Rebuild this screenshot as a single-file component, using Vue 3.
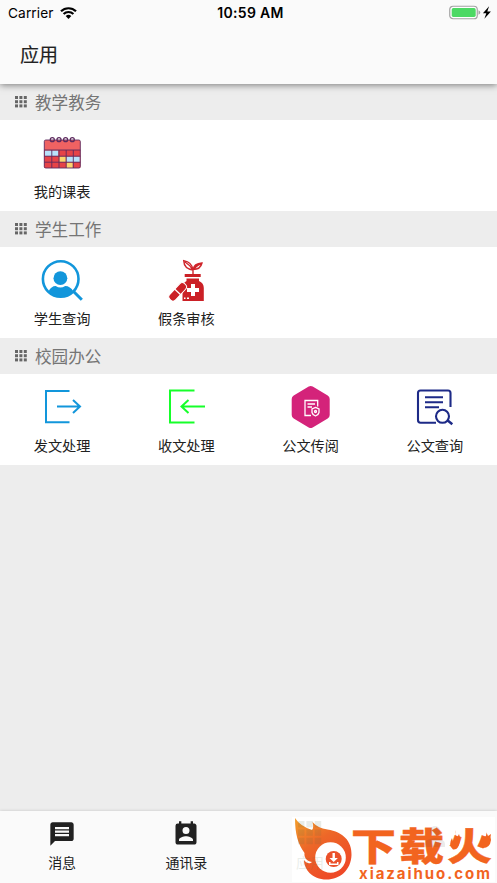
<script setup>
const sections = [
  { title: '教学教务', items: [{ label: '我的课表', icon: 'calendar' }] },
  { title: '学生工作', items: [{ label: '学生查询', icon: 'student' }, { label: '假条审核', icon: 'medicine' }] },
  {
    title: '校园办公',
    items: [
      { label: '发文处理', icon: 'send' },
      { label: '收文处理', icon: 'receive' },
      { label: '公文传阅', icon: 'circulate' },
      { label: '公文查询', icon: 'search' },
    ],
  },
]
const dots = [0, 1, 2, 3, 4, 5, 6, 7, 8]
</script>

<template>
  <div class="screen">
    <header class="top">
      <div class="status">
        <div class="carrier">
          <span>Carrier</span>
          <svg width="17" height="12" viewBox="0 0 17 12">
            <g fill="none" stroke="#000" stroke-width="2.2">
              <path d="M1 4.3a10.7 10.7 0 0 1 15 0" />
              <path d="M3.6 7a7 7 0 0 1 9.8 0" />
            </g>
            <path d="M8.5 12 5.7 9.1a4 4 0 0 1 5.6 0Z" />
          </svg>
        </div>
        <div class="time">10:59 AM</div>
        <div class="power">
          <svg width="43" height="15" viewBox="0 0 43 15">
            <rect x=".75" y="1.25" width="27.5" height="12.5" rx="3.3" fill="#fff" stroke="#a2a2a2" stroke-width="1.2" />
            <rect x="2.7" y="3.1" width="24" height="8.8" rx="1.6" fill="#4cd964" />
            <path d="M29.5 5.2q1.8.8 1.8 2.3t-1.8 2.3Z" fill="#a2a2a2" />
            <path d="m40.1 1.300-6.200 6.900h3.400l-1.900 5.500 6.500-7.300h-3.600Z" />
          </svg>
        </div>
      </div>
      <h1>应用</h1>
    </header>

    <main>
      <section v-for="section in sections" :key="section.title">
        <h2>
          <svg width="12" height="12" viewBox="0 0 12 12" fill="#666">
            <rect v-for="n in dots" :key="n" :x="(n % 3) * 4.4" :y="Math.floor(n / 3) * 4.2" width="3" height="3" />
          </svg>
          <span>{{ section.title }}</span>
        </h2>
        <div class="grid">
          <div v-for="item in section.items" :key="item.label" class="cell">
            <svg v-if="item.icon === 'calendar'" class="icon" viewBox="0 0 42 42">
              <g transform="translate(.3 1)">
                <rect x="3" y="7" width="36" height="28" rx="1.5" fill="#ef6262" />
                <path fill="#e64347" d="M3 17h36v18H3z" />
                <path fill="#b9e2fb" d="M3.5 17.5H17V23H3.5zM25 23.5h13.500V29H25z" />
                <path fill="#fbd66f" d="M18 23.500h6.500V29H18zM25 29.500h6.500V35H25z" />
                <g fill="none" stroke="#5d2a5e" stroke-width=".9">
                  <rect x="3" y="7" width="36" height="28" rx="1.500" />
                  <path d="M3 17h36M3 23.200h36M3 29.200h36M10.500 17v18M17.700 17v18M24.900 17v18M32 17v18" />
                  <g stroke-width="1.300"><circle cx="11" cy="6.700" r="2" /><circle cx="17.700" cy="6.700" r="2" /><circle cx="24.300" cy="6.700" r="2" /><circle cx="31" cy="6.700" r="2" /></g>
                </g>
              </g>
            </svg>
            <svg v-else-if="item.icon === 'student'" class="icon" viewBox="0 0 42 42">
              <circle cx="19.700" cy="20" r="17.800" fill="none" stroke="#1296db" stroke-width="2.600" />
              <circle cx="19.400" cy="19.200" r="6.900" fill="#1296db" />
              <path fill="#1296db" d="M7.500 32.500q2.700-5.500 7.200-5.500 4.700 3.200 9.500 0 5 0 8.300 5.500-5 5.500-12.800 5.500T7.500 32.500Z" />
              <path stroke="#1296db" stroke-width="3" d="m32.300 32.300 8.500 8.500" />
            </svg>
            <svg v-else-if="item.icon === 'medicine'" class="icon" viewBox="0 0 42 42">
              <g fill="none" stroke="#cf252b" stroke-width="1.400">
                <path d="M28 16V9.500M28 11Q19 10 18.700 1.600 27 3 28 11M20 3q5 3 8 8M28 10.500Q29 4.500 37 4q-1.500 6.500-9 6.500 4-4.500 8-6" />
              </g>
              <path fill="#cb2026" d="M19.700 15h16v3h-16zM21.500 19.500h12.500v2.500q4.800 2 4.800 7V42H17.500V29q0-5 4-7Z" />
              <path fill="#fff" d="M26 25h4v4h4v4h-4v4h-4v-4h-4v-4h4zM19 38.500h1.500V40H19zM22 38.500h2V40h-2z" />
              <g transform="rotate(-47 12.500 33)">
                <rect x="2" y="29" width="21.500" height="8" rx="3.500" fill="#cb2026" stroke="#fff" />
                <path stroke="#fff" stroke-width="1.300" d="M12.700 28.800v8.400" />
              </g>
            </svg>
            <svg v-else-if="item.icon === 'send'" class="icon" viewBox="0 0 42 42" fill="none" stroke="#1296db" stroke-width="2">
              <path d="M28.500 5H5v31.300h23.500M16 20.500h22.500M32 14l7 6.500-7 6.500" />
            </svg>
            <svg v-else-if="item.icon === 'receive'" class="icon" viewBox="0 0 42 42" fill="none" stroke="#16ff2a" stroke-width="2">
              <path d="M29.500 4.500H5v32h24.500M40 20.500H17M23.500 14l-7 6.500 7 6.500" />
            </svg>
            <svg v-else-if="item.icon === 'circulate'" class="icon" viewBox="0 0 42 42">
              <path fill="#d4237a" d="M18.700 .600q2-1.200 4 0l15 9q2 1.200 2 3.500v16q0 2.200-2 3.400l-15 9q-2 1.200-4 0l-15-9q-2-1.200-2-3.400v-16q0-2.300 2-3.500Z" />
              <g fill="none" stroke="#fff" stroke-width="1.300">
                <path d="M27.700 20.500v-6H15v15h6M17.500 18h7.500M17.500 21h4.500M25.500 21.400l3.500 1.500v3.600q-.500 2.500-3.500 3.500-3-1-3.500-3.500v-3.600Z" />
                <circle cx="25.500" cy="25.500" r="1" />
              </g>
            </svg>
            <svg v-else class="icon" viewBox="0 0 42 42" fill="none" stroke="#1d2a87" stroke-width="2.100">
              <path d="M36.500 21V7Q36.500 4.500 34 4.500H6.500Q4 4.500 4 7v27q0 2.700 2.500 2.700h15.500M11 11.200h18M11 16.200h18M11 21.200h14" />
              <circle cx="28.500" cy="30.300" r="6.500" /><path stroke-width="2.500" d="m33.400 34.300 4.900 4" />
            </svg>
            <span class="label">{{ item.label }}</span>
          </div>
        </div>
      </section>
    </main>

    <footer>
      <div class="tab">
        <svg width="28" height="28" viewBox="0 0 24 24" fill="#212121"><path d="M20 2H4c-1.100 0-2 .900-2 2v18l4-4h14c1.100 0 2-.900 2-2V4c0-1.100-.900-2-2-2zm-2 12H6v-2h12v2zm0-3H6V9h12v2zm0-3H6V6h12v2z" /></svg>
        <span>消息</span>
      </div>
      <div class="tab">
        <svg width="28" height="28" viewBox="0 0 24 24" fill="#212121"><path d="M19 3h-1V1h-2v2H8V1H6v2H5a2 2 0 0 0-2 2v14c0 1.100.900 2 2 2h14c1.100 0 2-.900 2-2V5c0-1.100-.900-2-2-2zm-7 3a3 3 0 1 1 0 6 3 3 0 0 1 0-6zm6 12H6v-1c0-2 4-3.100 6-3.100s6 1.100 6 3.100v1z" /></svg>
        <span>通讯录</span>
      </div>
    </footer>

    <aside class="brand">
      <svg class="logo" width="60" height="64" viewBox="0 0 60 64">
        <defs>
          <linearGradient id="fire" x1="0" y1="0" x2=".6" y2="1">
            <stop offset="0" stop-color="#f3a02c" /><stop offset=".45" stop-color="#ed6728" /><stop offset="1" stop-color="#ee4927" />
          </linearGradient>
        </defs>
        <path fill="url(#fire)" d="M1 1q5 8 17 12 2-2 .500-8 5 6 15 7.500C49 15 58 24 57.500 38 57 53 46 62.500 32.500 62.500 18 62.500 10 52 10 43c3 4 6 4 8 2-6-1-8-5-7.500-9C4 27 1 17 1 1Z" />
        <circle cx="36.500" cy="40.500" r="15.300" fill="#fff" />
        <circle cx="39.700" cy="42" r="8" fill="#eb512b" />
        <path fill="#fff" d="M38.500 36h2.400v5h3l-4.200 4-4.200-4h3zM35 45h1.500v1.500h6.500V45h1.500v3H35z" />
      </svg>
      <div class="brand-copy">
        <div class="brand-name"><span>下</span><span>载</span><span>火</span></div>
        <div class="brand-url">xiazaihuo.com</div>
      </div>
      <svg class="sparks" width="44" height="24" viewBox="0 0 44 24" fill="#f2641f">
        <path d="M7 1q-1 5 1 8l2-4q2 5 0 11-2 5-6 4.500Q-1 16 3 9l1 4q3-4 3-12Z" />
        <path d="M38 0q-1 4 1 7l3-2q-1 3 0 6-1 8-8 8-5-4-1-11l1 4q4-5 4-12Z" />
      </svg>
      <div class="ghost"><svg width="24" height="24" viewBox="0 0 12 12"><rect v-for="n in dots" :key="n" :x="(n % 3) * 4.200" :y="Math.floor(n / 3) * 4.200" width="3.200" height="3.200" /></svg><span>应用</span></div>
      <svg class="person" width="24" height="24" viewBox="0 0 24 24"><circle cx="12" cy="7" r="5" /><path d="M2 23v-3q0-5 10-6 10 1 10 6v3Z" /></svg>
    </aside>
  </div>
</template>

<style>
body { margin: 0; }
</style>

<style scoped>
.screen { position: relative; display: flex; flex-direction: column; width: 497px; height: 883px; overflow: hidden; background: #ededed; color: #212121; font-family: Inter, "Noto Sans CJK SC", sans-serif; }
.top { position: relative; z-index: 1; box-sizing: border-box; height: 84px; background: #fafafa; box-shadow: 0 1px 7px rgba(0, 0, 0, .5); }
.status { display: grid; grid-template-columns: 1fr auto 1fr; align-items: center; height: 26px; padding: 0 5px 0 8px; color: #000; font-size: 13.7px; line-height: 26px; }
.carrier { display: flex; align-items: center; gap: 6px; letter-spacing: .1px; }
.time { padding-left: 1px; font-weight: 600; font-size: 14px; letter-spacing: .3px; }
.power { display: flex; justify-content: flex-end; padding-bottom: 1px; }
h1 { margin: 0; padding: 14px 20px 0; font: 400 19px/28px "Noto Sans CJK SC", sans-serif; -webkit-text-stroke: .15px #212121; }
main { flex: 1; }
h2 { display: flex; align-items: center; gap: 8px; height: 36px; margin: 0; padding-left: 15px; color: #757575; font: 400 16.6px/36px "Noto Sans CJK SC", sans-serif; }
.grid { display: grid; grid-template-columns: repeat(4, 1fr); height: 91px; background: #fff; }
.cell { display: flex; flex-direction: column; align-items: center; padding-top: 12px; }
.icon { width: 42px; height: 42px; }
.label { margin-top: 6px; font-size: 14.2px; line-height: 22px; font-family: "Noto Sans CJK SC", sans-serif; }
footer { display: grid; grid-template-columns: repeat(4, 1fr); height: 72px; background: #fafafa; box-shadow: 0 0 3px rgba(0, 0, 0, .18); }
.tab { display: flex; flex-direction: column; align-items: center; padding-top: 9px; font: 400 14px/22px "Noto Sans CJK SC", sans-serif; }
.tab span { margin-top: 3px; }
.brand { position: absolute; left: 292px; top: 817px; display: flex; width: 203px; height: 65px; background: #fff; }
.logo { flex: none; margin-left: 2px; }
.brand-copy { width: 141px; color: #f2641f; }
.brand-name { display: flex; gap: 3px; height: 48px; margin-left: -3px; font: 900 45px/48px "Noto Sans CJK SC", sans-serif; -webkit-text-stroke: .4px #f2641f; transform: translateY(3px) scaleY(.84); }
.brand-url { padding: 2px 0 0 5px; font: 700 15px/13px Inter, sans-serif; letter-spacing: 1.95px; white-space: nowrap; }
.sparks { position: absolute; left: 157px; top: 12px; }
.ghost { position: absolute; left: 3px; top: 4px; display: flex; flex-direction: column; align-items: center; width: 30px; fill: #486848; color: #587858; font: 14px/22px "Noto Sans CJK SC", sans-serif; opacity: .12; }
.ghost span { margin-top: 6px; }
.person { position: absolute; left: 131px; top: 7px; fill: #444; opacity: .1; }
</style>
